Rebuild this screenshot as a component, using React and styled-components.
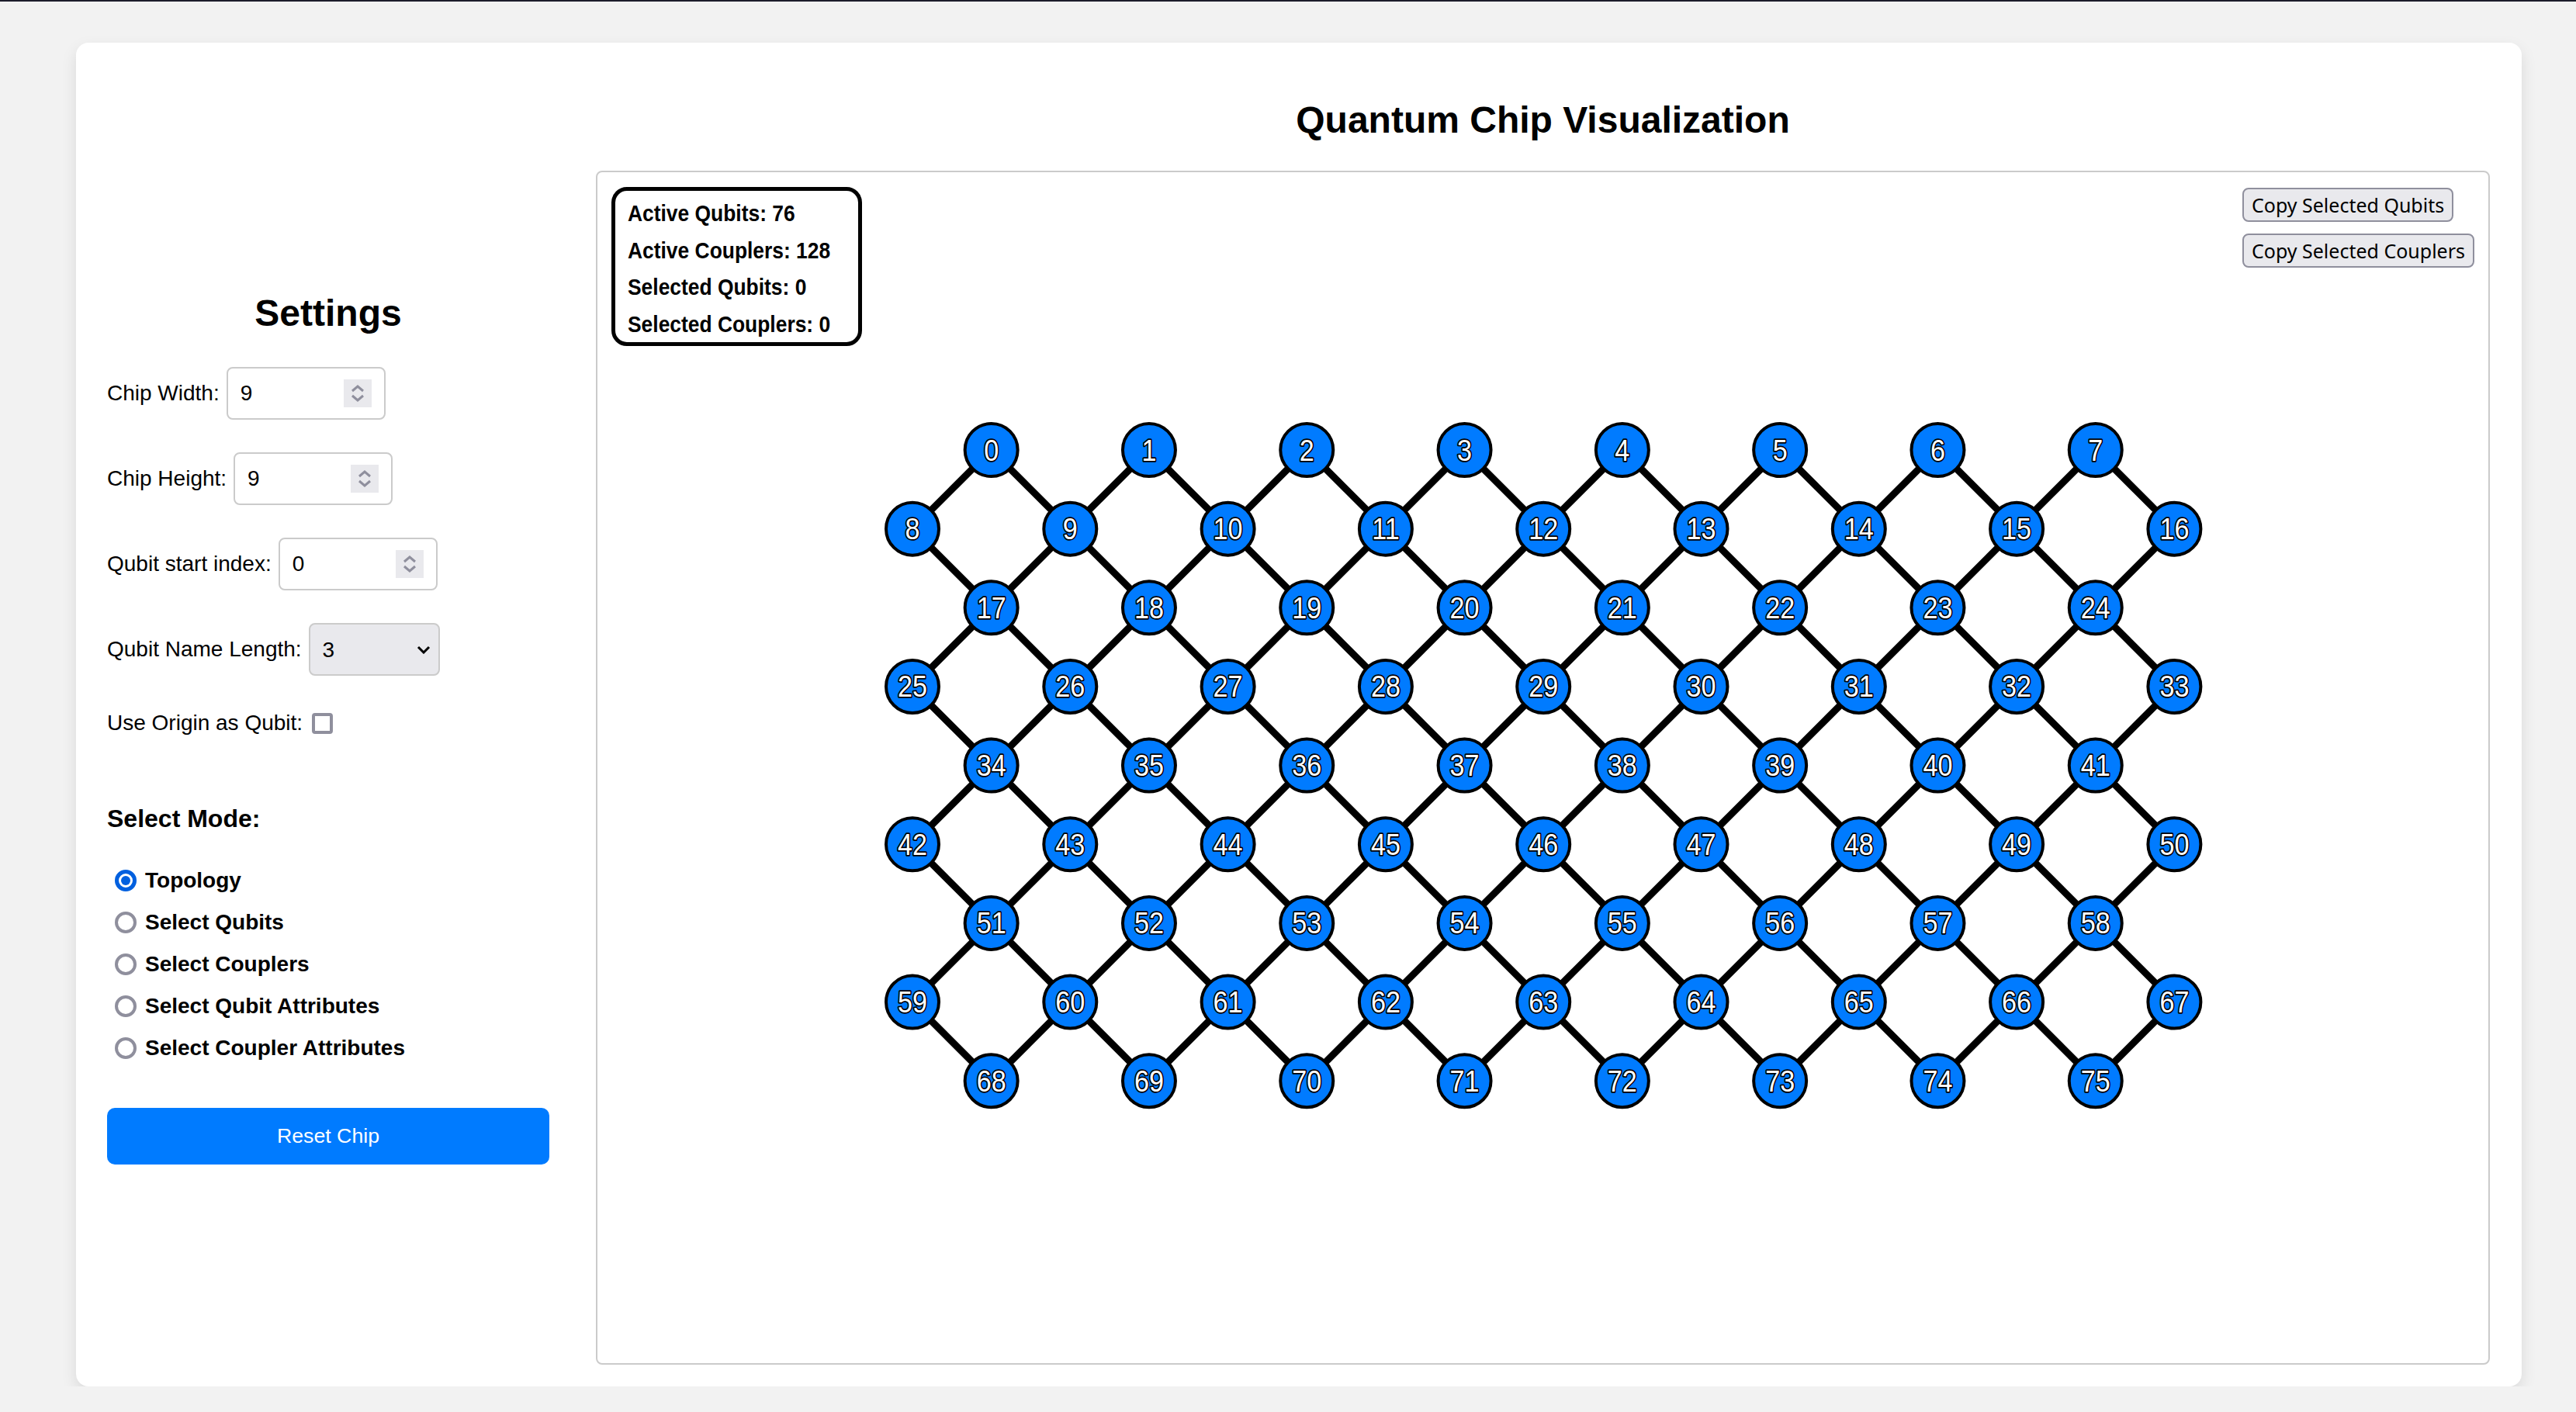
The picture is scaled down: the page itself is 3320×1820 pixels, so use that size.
import React from 'react';
import styled, { createGlobalStyle } from 'styled-components';

// page was captured at 200% zoom, so every size below is doubled
const GlobalStyle = createGlobalStyle`
  body {
    margin: 0;
    background: #f2f2f2;
    border-top: 2px solid #1d1d2b;
    font-family: "Liberation Sans", Arial, sans-serif;
    color: #000;
  }
`;

const STEP = 101.65;
const X0 = 406;
const Y0 = 358;

const buildChip = () => {
  const rows = [];
  let idx = 0;
  for (let r = 0; r < 9; r++) {
    const even = r % 2 === 0;
    const count = even ? 8 : 9;
    const row = [];
    for (let i = 0; i < count; i++) {
      row.push({
        id: idx++,
        x: X0 + (even ? STEP : 0) + 2 * STEP * i,
        y: Y0 + STEP * r,
      });
    }
    rows.push(row);
  }
  const edges = [];
  rows.forEach((row, r) => {
    if (r % 2 !== 0) return;
    row.forEach((q, i) => {
      [r - 1, r + 1].forEach((rr) => {
        if (rr < 0 || rr > 8) return;
        [i, i + 1].forEach((j) => {
          const t = rows[rr][j];
          edges.push({ key: `${q.id}-${t.id}`, x1: q.x, y1: q.y, x2: t.x, y2: t.y });
        });
      });
    });
  });
  return { qubits: rows.flat(), edges };
};

const chip = buildChip();

const Spinner = () => (
  <Spin>
    <svg width="36" height="36" viewBox="0 0 36 36">
      <path d="M11 15 L18 9 L25 15" fill="none" stroke="#8f8f9d" strokeWidth="3" />
      <path d="M11 21 L18 27 L25 21" fill="none" stroke="#8f8f9d" strokeWidth="3" />
    </svg>
  </Spin>
);

const NumberField = ({ label, value }) => (
  <Row>
    <Label>{label}</Label>
    <Field>
      <Input defaultValue={value} />
      <Spinner />
    </Field>
  </Row>
);

const modes = ['Topology', 'Select Qubits', 'Select Couplers', 'Select Qubit Attributes', 'Select Coupler Attributes'];

const ChipGraph = () => (
  <Graph viewBox="0 0 2437 1535">
    {chip.edges.map((e) => (
      <line key={e.key} x1={e.x1} y1={e.y1} x2={e.x2} y2={e.y2} stroke="#000" strokeWidth="9" />
    ))}
    {chip.qubits.map((q) => (
      <g key={q.id} transform={`translate(${q.x},${q.y})`}>
        <circle r="34" fill="#007bff" stroke="#000" strokeWidth="4" />
        <QubitLabel transform="scale(0.9,1)" y="13.5" textAnchor="middle">
          {q.id}
        </QubitLabel>
      </g>
    ))}
  </Graph>
);

const App = () => (
  <>
    <GlobalStyle />
    <Card>
      <Sidebar>
        <Heading>Settings</Heading>
        <NumberField label="Chip Width:" value="9" />
        <NumberField label="Chip Height:" value="9" />
        <NumberField label="Qubit start index:" value="0" />
        <Row>
          <Label>Qubit Name Length:</Label>
          <SelectWrap>
            <Select defaultValue="3">
              <option value="2">2</option>
              <option value="3">3</option>
              <option value="4">4</option>
            </Select>
            <Chevron width="18" height="12" viewBox="0 0 18 12">
              <path d="M2 3 L9 10 L16 3" fill="none" stroke="#000" strokeWidth="3" />
            </Chevron>
          </SelectWrap>
        </Row>
        <Row $short>
          <Label>Use Origin as Qubit:</Label>
          <Checkbox type="checkbox" />
        </Row>
        <ModeTitle>Select Mode:</ModeTitle>
        <Modes>
          {modes.map((m, i) => (
            <Mode key={m}>
              <Radio $checked={i === 0} />
              {m}
            </Mode>
          ))}
        </Modes>
        <Reset>Reset Chip</Reset>
      </Sidebar>
      <Main>
        <Title>Quantum Chip Visualization</Title>
        <Panel>
          <ChipGraph />
          <Stats>
            <Stat>Active Qubits: 76</Stat>
            <Stat>Active Couplers: 128</Stat>
            <Stat>Selected Qubits: 0</Stat>
            <Stat>Selected Couplers: 0</Stat>
          </Stats>
          <Actions>
            <CopyButton>Copy Selected Qubits</CopyButton>
            <CopyButton>Copy Selected Couplers</CopyButton>
          </Actions>
        </Panel>
      </Main>
    </Card>
  </>
);

const Card = styled.div`
  display: flex;
  box-sizing: border-box;
  width: 3152px;
  height: 1732px;
  margin: 53px 0 0 98px;
  padding: 0 41px 28px 40px;
  background: #fff;
  border-radius: 16px;
  box-shadow: 0 8px 20px rgba(0, 0, 0, .1);
`;

const Sidebar = styled.aside`
  display: flex;
  flex-direction: column;
  flex-shrink: 0;
  width: 570px;
  margin-right: 60px;
  padding-top: 321px;
`;

const Heading = styled.h2`
  margin: 0 0 42px;
  font-size: 48px;
  line-height: 55px;
  text-align: center;
`;

const Row = styled.div`
  display: flex;
  align-items: center;
  height: ${(p) => (p.$short ? '38px' : '68px')};
  margin-bottom: 42px;
`;

const Label = styled.label`
  margin-right: 9px;
  font-size: 28px;
  white-space: nowrap;
`;

const Field = styled.div`
  display: flex;
  align-items: center;
  box-sizing: border-box;
  width: 205px;
  height: 68px;
  padding: 0 16px;
  border: 2px solid #cbcbcb;
  border-radius: 8px;
`;

const Input = styled.input`
  flex: 1;
  min-width: 0;
  padding: 0;
  border: 0;
  outline: none;
  font: 28px "Liberation Sans", Arial, sans-serif;
  color: #000;
`;

const Spin = styled.span`
  display: flex;
  width: 36px;
  height: 36px;
  background: #e9e9ed;
`;

const SelectWrap = styled.div`
  position: relative;
  display: flex;
`;

const Select = styled.select`
  appearance: none;
  box-sizing: border-box;
  width: 169px;
  height: 68px;
  padding: 0 16px;
  background: #e9e9ed;
  border: 2px solid #cbcbcb;
  border-radius: 8px;
  font: 28px "Liberation Sans", Arial, sans-serif;
  color: #000;
`;

const Chevron = styled.svg`
  position: absolute;
  right: 12px;
  top: 28px;
  pointer-events: none;
`;

const Checkbox = styled.input`
  appearance: none;
  box-sizing: border-box;
  width: 27px;
  height: 27px;
  margin: 0 0 0 3px;
  border: 4px solid #8f8f9d;
  border-radius: 4px;
  background: #fff;
`;

const ModeTitle = styled.h3`
  margin: 44px 0 34px;
  font-size: 32px;
  line-height: 37px;
`;

const Modes = styled.div`
  display: flex;
  flex-direction: column;
  margin-bottom: 50px;
`;

const Mode = styled.label`
  display: flex;
  align-items: center;
  height: 54px;
  font-size: 28px;
  font-weight: bold;
`;

const Radio = styled.span`
  position: relative;
  box-sizing: border-box;
  width: 28px;
  height: 28px;
  margin: 0 11px 0 10px;
  border: ${(p) => (p.$checked ? '5px solid #0060df' : '4px solid #8f8f9d')};
  border-radius: 50%;
  background: #fff;

  &::after {
    content: '';
    display: ${(p) => (p.$checked ? 'block' : 'none')};
    position: absolute;
    left: 3px;
    top: 3px;
    width: 12px;
    height: 12px;
    border-radius: 50%;
    background: #0060df;
  }
`;

const Reset = styled.button`
  width: 570px;
  height: 73px;
  border: 0;
  border-radius: 10px;
  background: #007bff;
  color: #fff;
  font: 26.7px "Liberation Sans", Arial, sans-serif;
`;

const Main = styled.main`
  display: flex;
  flex-direction: column;
  flex: 1;
  min-width: 0;
`;

const Title = styled.h1`
  margin: 72px 0 38px;
  font-size: 48px;
  line-height: 55px;
  text-align: center;
`;

const Panel = styled.section`
  position: relative;
  flex: 1;
  box-sizing: border-box;
  border: 2px solid #cbcbcb;
  border-radius: 8px;
`;

const Graph = styled.svg`
  position: absolute;
  inset: 0;
  width: 100%;
  height: 100%;
`;

const QubitLabel = styled.text`
  font-family: "Liberation Sans", Arial, sans-serif;
  font-size: 38px;
  fill: #fff;
  stroke: #000;
  stroke-width: 3.5px;
  stroke-linejoin: round;
  paint-order: stroke;
`;

const Stats = styled.div`
  position: absolute;
  left: 18px;
  top: 19px;
  box-sizing: border-box;
  width: 323px;
  height: 205px;
  padding: 5px 0 0 16px;
  border: 5px solid #000;
  border-radius: 20px;
  background: #fff;
`;

const Stat = styled.div`
  height: 47.5px;
  line-height: 47.5px;
  font-size: 30px;
  font-weight: bold;
  white-space: nowrap;
  transform: scaleX(.88);
  transform-origin: left center;
`;

const Actions = styled.div`
  position: absolute;
  top: 20px;
  right: 18px;
  display: flex;
  flex-direction: column;
  align-items: flex-start;
  gap: 15px;
`;

const CopyButton = styled.button`
  height: 44px;
  padding: 0 10px;
  background: #e9e9ed;
  border: 2px solid #8f8f9d;
  border-radius: 8px;
  font: 25px "Noto Sans", "Open Sans", sans-serif;
  color: #000;
`;

export default App;
